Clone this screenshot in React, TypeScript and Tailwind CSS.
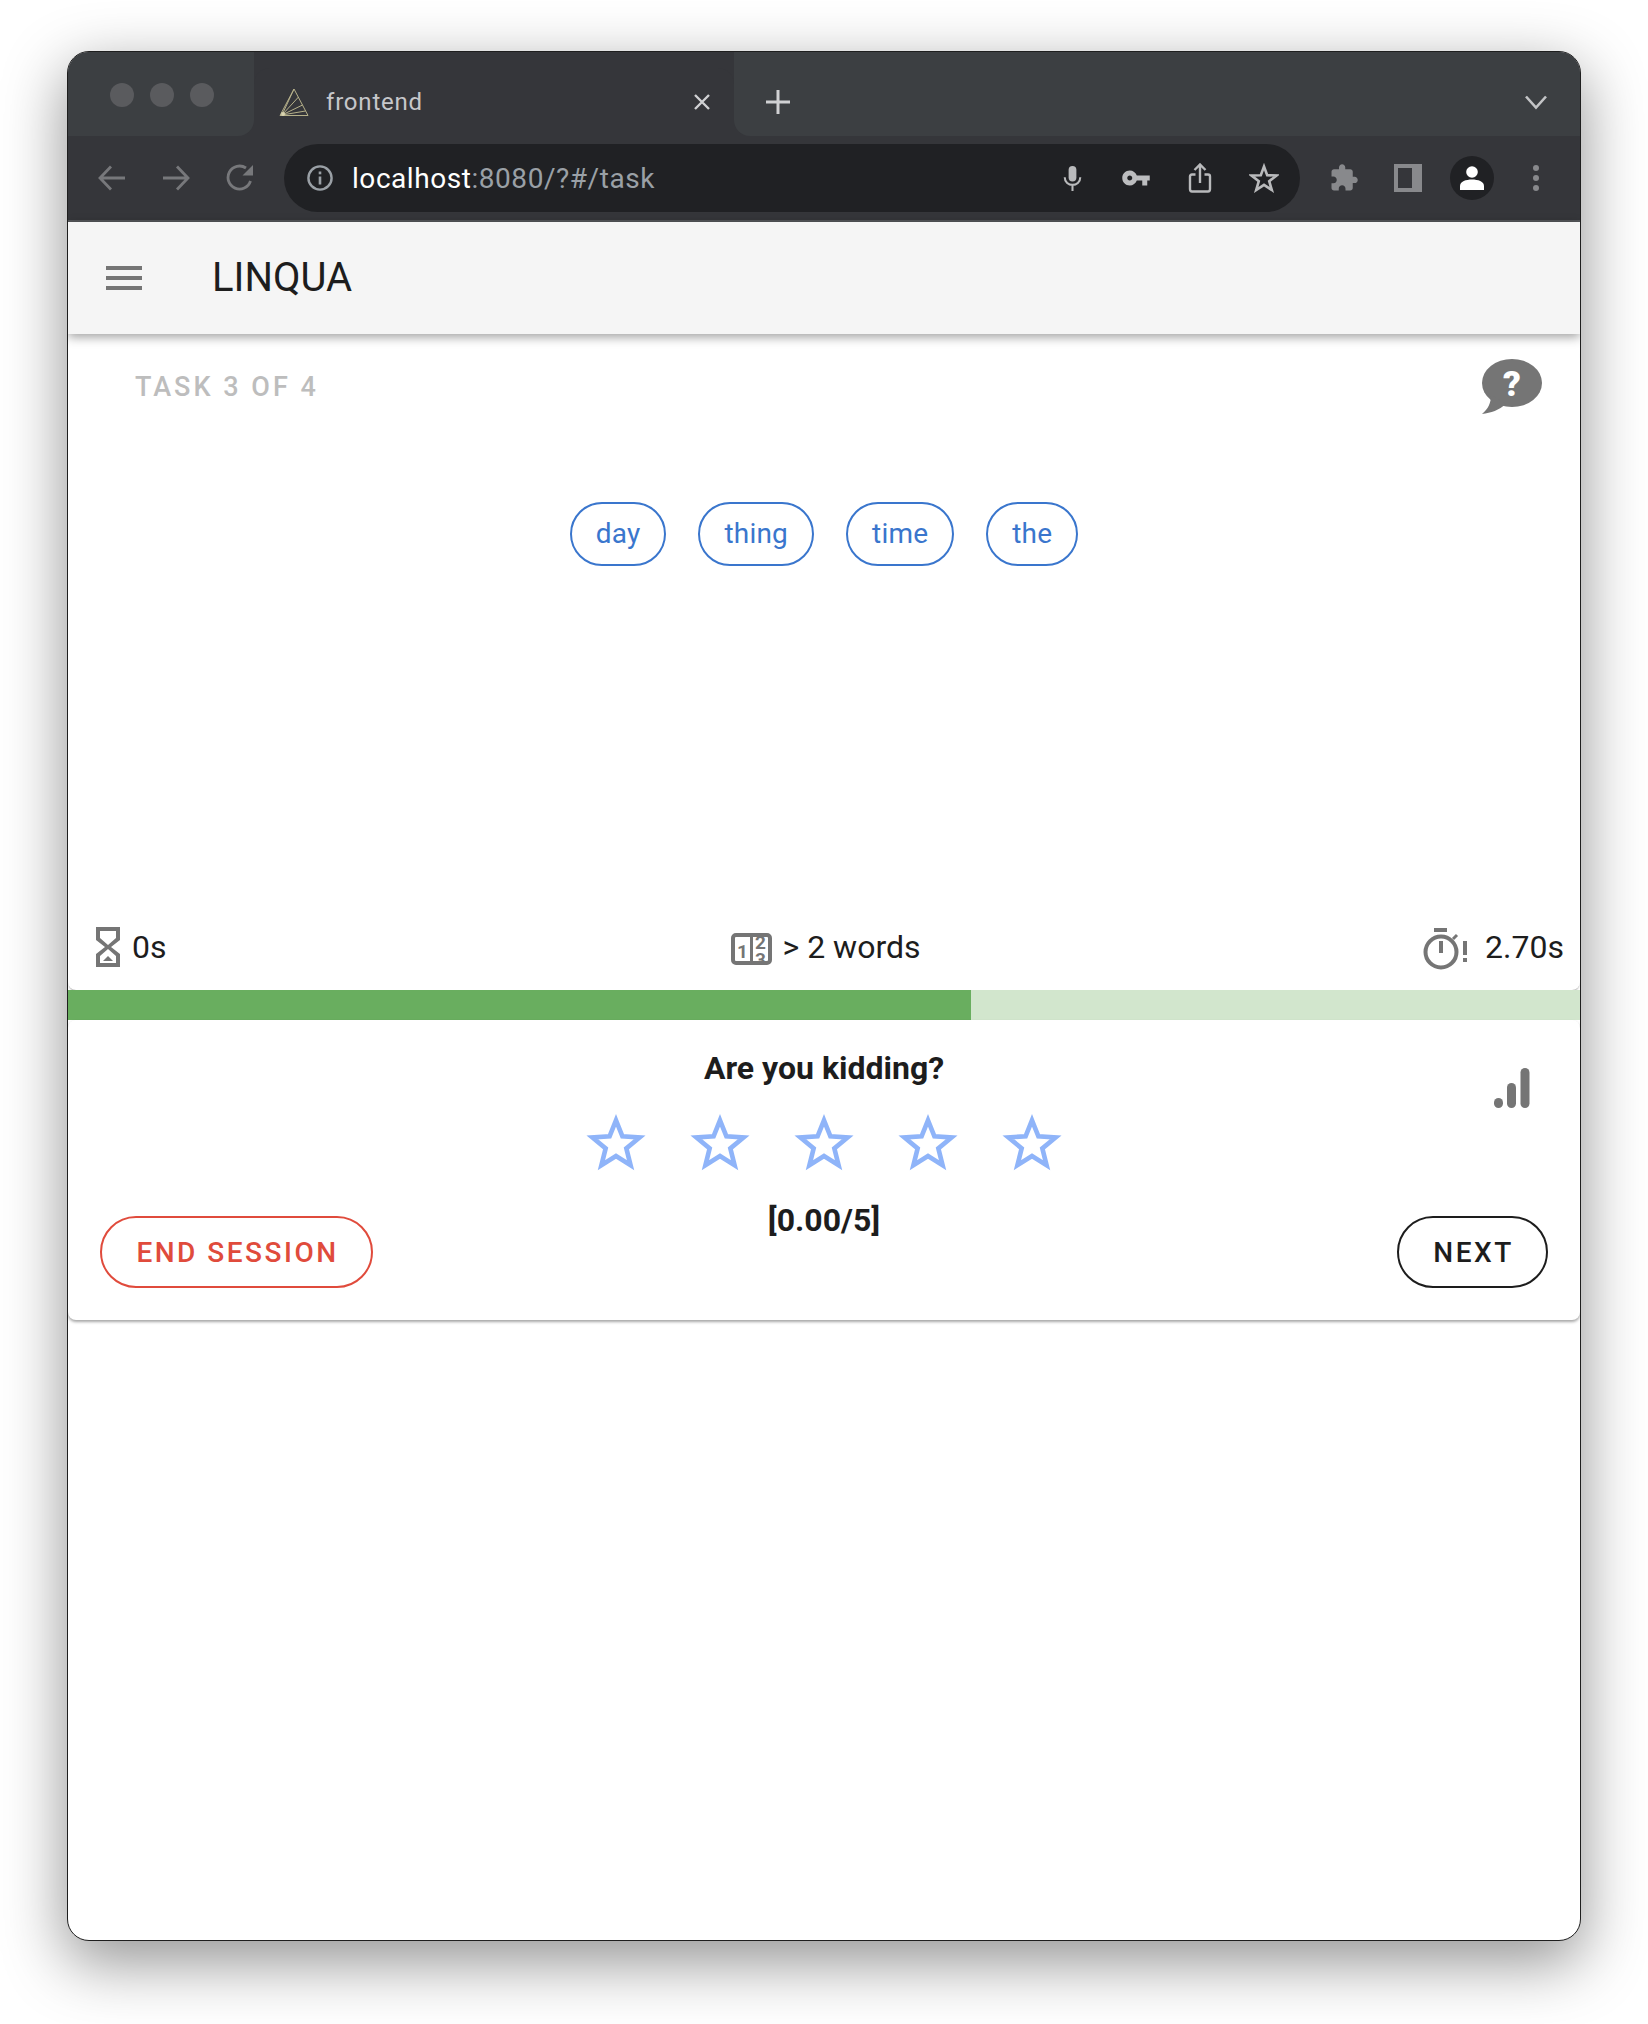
const font = { fontFamily: '"Roboto", "Liberation Sans", sans-serif' };

function Favicon() {
  return (
    <svg width="30" height="29" viewBox="0 0 30 29" fill="none" stroke="#b5b08a" strokeWidth="1">
      <path d="M15 1 L29 27.5 L1 27.5 Z" />
      <path d="M3 27 L15 1 M3 27 L19.5 9 M3 27 L23.5 17 M3 27 L26.5 23" />
      <circle cx="4" cy="26" r="2" fill="#d9d4b0" stroke="none" />
    </svg>
  );
}

function Icon({ children, className = "" }: { children: React.ReactNode; className?: string }) {
  return <div className={"w-16 h-16 flex items-center justify-center shrink-0 " + className}>{children}</div>;
}

function ChipWord({ children }: { children: string }) {
  return (
    <div className="h-[64px] px-[24px] flex items-center rounded-full border-2 border-[#3a76cd] text-[#3a76cd] text-[28px] tracking-[0.2px]">
      {children}
    </div>
  );
}

function Star() {
  return (
    <svg width="62" height="60" viewBox="0 0 60 57" className="overflow-visible shrink-0">
      <polygon
        points="30,6.5 36.2,22 52.8,23.1 40,33.7 44.1,49.9 30,41 15.9,49.9 20,33.7 7.2,23.1 23.8,22"
        fill="none"
        stroke="#8fb4f9"
        strokeWidth="4.5"
        strokeMiterlimit="10"
      />
    </svg>
  );
}

export default function App() {
  return (
    <div className="w-[1648px] h-[2024px] bg-white pt-[51px] pl-[67px]" style={font}>
      <div className="w-[1514px] h-[1890px] rounded-[22px] border border-[#1e1e1e] overflow-hidden flex flex-col bg-white shadow-[0_20px_62px_2px_rgba(0,0,0,0.42)]">
        {/* tab strip */}
        <div className="h-[84px] flex bg-[#35363a] shrink-0">
          <div className="w-[186px] bg-[#3c3f42] rounded-br-[16px] flex items-center gap-[16px] pl-[42px] pt-[2px] h-full">
            <div className="w-6 h-6 rounded-full bg-[#5a5b5e]" />
            <div className="w-6 h-6 rounded-full bg-[#5a5b5e]" />
            <div className="w-6 h-6 rounded-full bg-[#5a5b5e]" />
          </div>
          <div className="w-[480px] mt-[16px] rounded-t-[16px] bg-[#35363a] flex items-center pl-[25px] pr-[20px]">
            <Favicon />
            <span className="ml-[17px] text-[24px] tracking-[0.8px] text-[#c6c7ca]">frontend</span>
            <svg className="ml-auto" width="24" height="24" viewBox="0 0 24 24" stroke="#d0d1d3" strokeWidth="2.4" fill="none">
              <path d="M5 5 L19 19 M19 5 L5 19" />
            </svg>
          </div>
          <div className="flex-1 bg-[#3c3f42] rounded-bl-[16px] flex items-center pl-[31px] pr-[32px] justify-between pt-[16px]">
            <svg width="26" height="26" viewBox="0 0 26 26" stroke="#d0d1d3" strokeWidth="3" fill="none">
              <path d="M13 1 V25 M1 13 H25" />
            </svg>
            <svg width="24" height="16" viewBox="0 0 24 16" stroke="#c3c4c6" strokeWidth="2.6" fill="none">
              <path d="M2 2.5 L12 13.5 L22 2.5" />
            </svg>
          </div>
        </div>
        {/* toolbar */}
        <div className="h-[86px] bg-[#35363a] border-b-2 border-[#55575a] flex items-center pl-[12px] shrink-0">
          <Icon>
            <svg width="28" height="26" viewBox="0 0 28 26" stroke="#77787b" strokeWidth="2.8" fill="none">
              <path d="M27 13 H2 M13 1.5 L2 13 L13 24.5" />
            </svg>
          </Icon>
          <Icon>
            <svg width="28" height="26" viewBox="0 0 28 26" stroke="#77787b" strokeWidth="2.8" fill="none">
              <path d="M1 13 H26 M15 1.5 L26 13 L15 24.5" />
            </svg>
          </Icon>
          <Icon>
            <svg width="28" height="28" viewBox="0 0 28 28" fill="none">
              <path d="M24.5 17 A11.5 11.5 0 1 1 20 4" stroke="#77787b" strokeWidth="2.8" />
              <path d="M27 1 V11.5 H16.5 Z" fill="#77787b" />
            </svg>
          </Icon>
          <div className="ml-[12px] w-[1016px] h-[68px] rounded-full bg-[#202124] flex items-center pl-[23px] pr-[4px]">
            <svg width="26" height="26" viewBox="0 0 26 26" fill="none" className="shrink-0">
              <circle cx="13" cy="13" r="11.6" stroke="#9aa0a6" strokeWidth="2.4" />
              <rect x="11.7" y="11.5" width="2.6" height="8" fill="#9aa0a6" />
              <rect x="11.7" y="6.5" width="2.6" height="2.8" fill="#9aa0a6" />
            </svg>
            <div className="ml-[19px] pt-[1px] text-[28px] text-[#9aa0a6] tracking-[0.55px] leading-none">
              <span className="text-white">localhost</span>:8080/?#/task
            </div>
            <div className="ml-auto flex">
              <Icon>
                <svg width="19" height="26" viewBox="0 0 22 30" fill="none">
                  <rect x="6.5" y="1" width="9" height="18" rx="4.5" fill="#b9babc" />
                  <path d="M2 14 C2 26 20 26 20 14 M11 23 V30" stroke="#b9babc" strokeWidth="2.4" />
                </svg>
              </Icon>
              <Icon>
                <svg width="30" height="30" viewBox="0 0 24 24" fill="#bcbdbf">
                  <path d="M12.65 10C11.83 7.67 9.61 6 7 6c-3.31 0-6 2.69-6 6s2.69 6 6 6c2.61 0 4.83-1.67 5.65-4H17v4h4v-4h2v-4H12.65zM7 14c-1.1 0-2-.9-2-2s.9-2 2-2 2 .9 2 2-.9 2-2 2z" />
                </svg>
              </Icon>
              <Icon>
                <svg width="24" height="30" viewBox="0 0 24 30" fill="none" stroke="#b9babc" strokeWidth="2.4">
                  <path d="M7.5 11.5 H4 Q2 11.5 2 13.5 V26 Q2 28.5 4 28.5 H20 Q22 28.5 22 26 V13.5 Q22 11.5 20 11.5 H16.5 M12 20 V2 M6.5 7 L12 1.5 L17.5 7" />
                </svg>
              </Icon>
              <Icon>
                <svg width="30" height="30" viewBox="0 0 30 30" fill="none">
                  <polygon points="15,3.5 18.2,12.2 27.5,12.5 20.2,18.2 22.8,27 15,21.8 7.2,27 9.8,18.2 2.5,12.5 11.8,12.2" stroke="#b9babc" strokeWidth="2.6" strokeMiterlimit="8" />
                </svg>
              </Icon>
            </div>
          </div>
          <Icon className="ml-[12px]">
            <svg width="30" height="30" viewBox="0 0 24 24" fill="#88898c">
              <path d="M20.5 11H19V7c0-1.1-.9-2-2-2h-4V3.5C13 2.12 11.88 1 10.5 1S8 2.12 8 3.5V5H4c-1.1 0-1.99.9-1.99 2v3.8H3.5c1.49 0 2.7 1.21 2.7 2.7s-1.21 2.7-2.7 2.7H2V20c0 1.1.9 2 2 2h3.8v-1.5c0-1.49 1.21-2.7 2.7-2.7 1.49 0 2.7 1.21 2.7 2.7V22H17c1.1 0 2-.9 2-2v-4h1.5c1.38 0 2.5-1.12 2.5-2.5S21.88 11 20.5 11z" />
            </svg>
          </Icon>
          <Icon>
            <svg width="28" height="28" viewBox="0 0 28 28" fill="#88898c">
              <path fillRule="evenodd" d="M0 0 H28 V28 H0 Z M4 4 V24 H18 V4 Z" />
            </svg>
          </Icon>
          <Icon>
            <div className="w-11 h-11 rounded-full bg-[#202124] flex items-center justify-center">
              <svg width="26" height="26" viewBox="0 0 26 26" fill="#fff">
                <circle cx="13" cy="7" r="5.8" />
                <path d="M1 25 V21 C1 16.5 7 14.5 13 14.5 C19 14.5 25 16.5 25 21 V25 Z" />
              </svg>
            </div>
          </Icon>
          <Icon>
            <svg width="8" height="28" viewBox="0 0 8 28" fill="#88898c">
              <circle cx="4" cy="4" r="3" />
              <circle cx="4" cy="14" r="3" />
              <circle cx="4" cy="24" r="3" />
            </svg>
          </Icon>
        </div>
        {/* app bar */}
        <div className="relative z-10 h-[112px] bg-[#f5f5f5] flex items-center pl-[32px] shrink-0 shadow-[0_3px_10px_rgba(0,0,0,0.38)]">
          <svg width="48" height="48" viewBox="0 0 24 24" fill="#757575" className="shrink-0">
            <path d="M3 18h18v-2H3v2zm0-5h18v-2H3v2zm0-7v2h18V6H3z" />
          </svg>
          <div className="ml-[64px] text-[40px] text-[#1d1d1d]">LINQUA</div>
        </div>
        {/* main card */}
        <div className="mt-[16px] h-[640px] rounded-[8px] shrink-0 bg-white shadow-[0_2px_2px_-1px_rgba(0,0,0,0.4)] flex flex-col justify-between">
          <div>
            <div className="flex items-start justify-between pt-[9px] pl-[67px] pr-[38px]">
              <div className="mt-[8px] leading-[40px] text-[27px] font-medium tracking-[3px] text-[#bdbdbd]">TASK 3 OF 4</div>
              <svg width="60" height="55" viewBox="0 0 60 55" fill="#757575" className="shrink-0">
                <ellipse cx="30" cy="24" rx="30" ry="24" />
                <path d="M9 36 C9 44 6 50 0 55 C9 54 17 51 24 45 Z" />
                <text x="30" y="37" textAnchor="middle" fontSize="35" fontWeight="900" fill="#fff" fontFamily="Roboto, sans-serif">?</text>
              </svg>
            </div>
            <div className="mt-[88px] flex justify-center gap-[32px]">
              <ChipWord>day</ChipWord>
              <ChipWord>thing</ChipWord>
              <ChipWord>time</ChipWord>
              <ChipWord>the</ChipWord>
            </div>
          </div>
          <div className="grid grid-cols-3 items-center pl-[28px] pr-[16px] pb-[18px] text-[32px] text-[#1d1d1d] h-[68px]">
            <div className="flex items-center gap-[12px] justify-self-start">
              <svg width="24" height="40" viewBox="0 0 24 40" fill="#757575" className="shrink-0">
                <path fillRule="evenodd" d="M0 0 H24 V13 L15 20 L24 27 V40 H0 V27 L9 20 L0 13 Z M4 4 V11 L12 18 L20 11 V4 Z M4 36 H20 V29 L12 22 L4 29 Z" />
                <path d="M12 29 L17 34 H7 Z" />
              </svg>
              <span>0s</span>
            </div>
            <div className="flex items-center gap-[10px] justify-self-center mr-[8px]">
              <svg width="41" height="32" viewBox="0 0 41 32" className="shrink-0 mt-[4px]">
                <defs>
                  <clipPath id="numbers"><rect x="3" y="3" width="35" height="26" /></clipPath>
                </defs>
                <rect x="2" y="2" width="37" height="28" rx="3" fill="none" stroke="#757575" strokeWidth="4" />
                <rect x="19" y="2" width="3" height="28" fill="#757575" />
                <g clipPath="url(#numbers)" fill="#757575" fontFamily="Roboto, sans-serif" fontWeight="700" fontSize="19">
                  <text x="6" y="25">1</text>
                  <text x="24" y="16">2</text>
                  <text x="24" y="33">3</text>
                </g>
              </svg>
              <span>&gt; 2 words</span>
            </div>
            <div className="flex items-center gap-[17px] justify-self-end">
              <svg width="46" height="42" viewBox="0 0 46 42" fill="none" className="shrink-0 mt-[4px]">
                <rect x="12" y="0" width="13" height="4" fill="#757575" />
                <circle cx="19" cy="24" r="15.5" stroke="#757575" strokeWidth="4" />
                <rect x="17" y="13" width="4" height="12" fill="#757575" />
                <path d="M31 11 L35 7" stroke="#757575" strokeWidth="3" />
                <rect x="41" y="13" width="4" height="14" fill="#757575" />
                <rect x="41" y="30" width="4" height="4" fill="#757575" />
              </svg>
              <span>2.70s</span>
            </div>
          </div>
        </div>
        {/* progress */}
        <div className="h-[30px] bg-[#d2e6cd] shrink-0">
          <div className="h-full w-[903px] bg-[#69ae5f]" />
        </div>
        {/* rating card */}
        <div className="h-[300px] rounded-[8px] bg-white shrink-0 shadow-[0_2px_3px_rgba(0,0,0,0.35)] grid grid-cols-[1fr_auto_1fr] pl-[32px] pr-[32px] pb-[32px]">
          <div className="flex items-end justify-start">
            <button className="h-[72px] w-[273px] pl-[2px] pt-[1px] rounded-full border-2 border-[#e04b3c] text-[#e04b3c] text-[28px] font-medium tracking-[2.5px]">END SESSION</button>
          </div>
          <div className="flex flex-col items-center pt-[28px] text-[#1d1d1d]">
            <div className="text-[32px] font-bold leading-[40px]">Are you kidding?</div>
            <div className="mt-[25px] flex gap-[42px]">
              <Star />
              <Star />
              <Star />
              <Star />
              <Star />
            </div>
            <div className="mt-[27px] text-[32px] font-bold leading-[40px]">[0.00/5]</div>
          </div>
          <div className="flex flex-col items-end justify-between pt-[48px]">
            <svg width="36" height="40" viewBox="0 0 36 40" fill="#757575" className="mr-[18px] shrink-0">
              <rect x="0" y="30" width="9" height="10" rx="4.5" />
              <rect x="13" y="15" width="9" height="25" rx="4.5" />
              <rect x="26.5" y="0" width="9" height="40" rx="4.5" />
            </svg>
            <button className="h-[72px] w-[151px] pl-[2px] pt-[1px] rounded-full border-2 border-[#1d1d1d] text-[#1d1d1d] text-[28px] font-medium tracking-[2.5px]">NEXT</button>
          </div>
        </div>
      </div>
    </div>
  );
}
